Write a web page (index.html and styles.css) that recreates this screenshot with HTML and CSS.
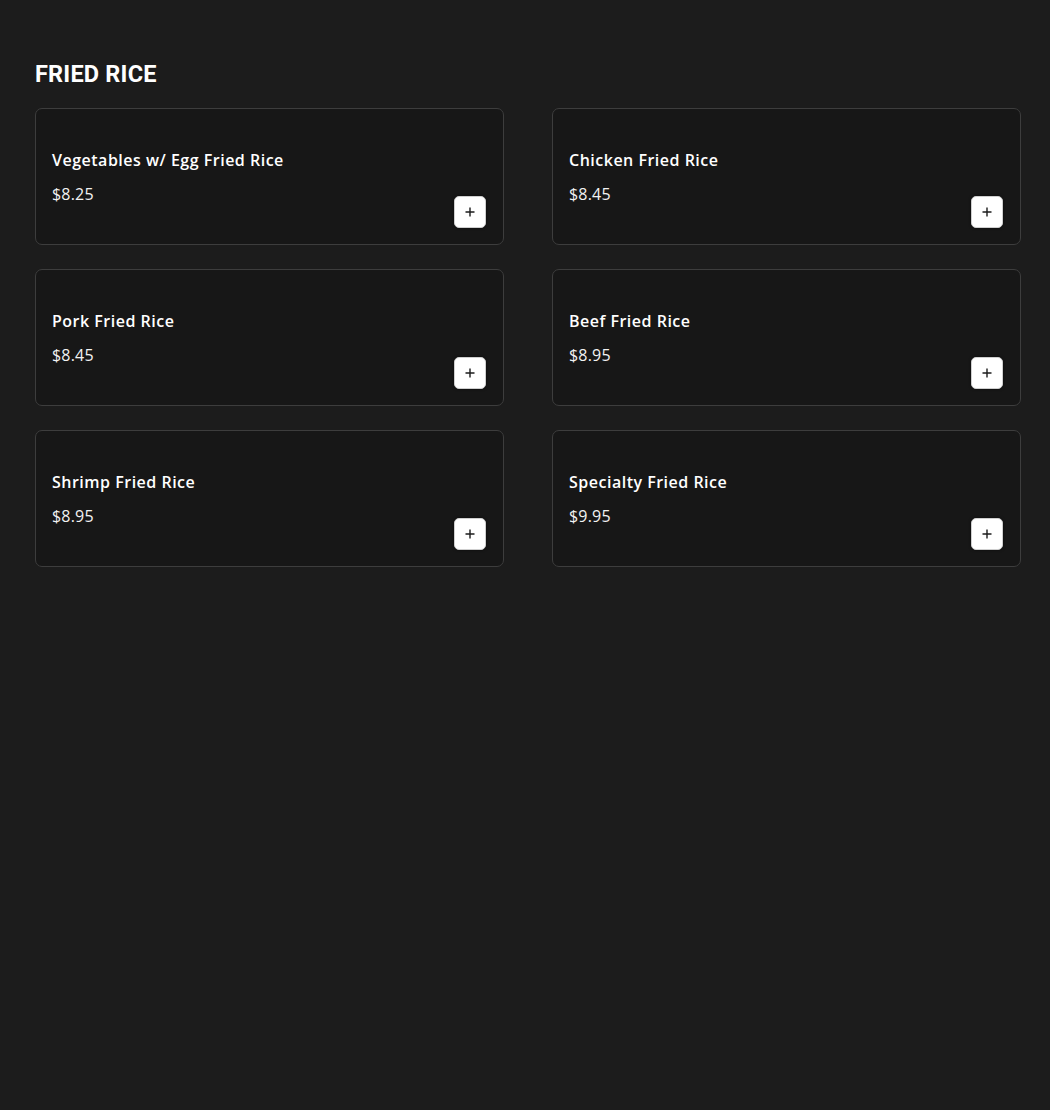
FILE: index.html
```html
<!DOCTYPE html>
<html lang="en">
<head>
<meta charset="utf-8">
<title>Fried Rice</title>
<link rel="stylesheet" href="styles.css">
</head>
<body>
<main class="page">
  <h2 class="section-title">FRIED RICE</h2>
  <div class="grid">
    <div class="card">
      <div class="info"><div class="name">Vegetables w/ Egg Fried Rice</div><div class="price">$8.25</div></div>
      <button class="add" aria-label="Add"><svg viewBox="0 0 12 12" width="12" height="12"><path d="M6 1.5v9M1.5 6h9" stroke="#1c1c1c" stroke-width="1.4" fill="none"/></svg></button>
    </div>
    <div class="card">
      <div class="info"><div class="name">Chicken Fried Rice</div><div class="price">$8.45</div></div>
      <button class="add" aria-label="Add"><svg viewBox="0 0 12 12" width="12" height="12"><path d="M6 1.5v9M1.5 6h9" stroke="#1c1c1c" stroke-width="1.4" fill="none"/></svg></button>
    </div>
    <div class="card">
      <div class="info"><div class="name">Pork Fried Rice</div><div class="price">$8.45</div></div>
      <button class="add" aria-label="Add"><svg viewBox="0 0 12 12" width="12" height="12"><path d="M6 1.5v9M1.5 6h9" stroke="#1c1c1c" stroke-width="1.4" fill="none"/></svg></button>
    </div>
    <div class="card">
      <div class="info"><div class="name">Beef Fried Rice</div><div class="price">$8.95</div></div>
      <button class="add" aria-label="Add"><svg viewBox="0 0 12 12" width="12" height="12"><path d="M6 1.5v9M1.5 6h9" stroke="#1c1c1c" stroke-width="1.4" fill="none"/></svg></button>
    </div>
    <div class="card">
      <div class="info"><div class="name">Shrimp Fried Rice</div><div class="price">$8.95</div></div>
      <button class="add" aria-label="Add"><svg viewBox="0 0 12 12" width="12" height="12"><path d="M6 1.5v9M1.5 6h9" stroke="#1c1c1c" stroke-width="1.4" fill="none"/></svg></button>
    </div>
    <div class="card">
      <div class="info"><div class="name">Specialty Fried Rice</div><div class="price">$9.95</div></div>
      <button class="add" aria-label="Add"><svg viewBox="0 0 12 12" width="12" height="12"><path d="M6 1.5v9M1.5 6h9" stroke="#1c1c1c" stroke-width="1.4" fill="none"/></svg></button>
    </div>
  </div>
</main>
</body>
</html>
```

FILE: styles.css
```css
html, body {
  margin: 0;
  padding: 0;
  background: #1c1c1c;
  min-height: 100%;
}
body {
  color: #ffffff;
  font-family: "Open Sans", "Liberation Sans", sans-serif;
}
.page {
  padding: 59px 29px 0 35px;
}
.section-title {
  margin: 0 0 19px 0;
  font-family: Roboto, "Liberation Sans", sans-serif;
  font-weight: 700;
  font-size: 23.5px;
  line-height: 30px;
  letter-spacing: 0.2px;
}
.grid {
  display: grid;
  grid-template-columns: 1fr 1fr;
  column-gap: 48px;
  row-gap: 24px;
}
.card {
  box-sizing: border-box;
  height: 137px;
  background: #171717;
  border: 1px solid #3d3d3d;
  border-radius: 7px;
  padding: 16px 17px 16px 16px;
  display: flex;
  justify-content: space-between;
  align-items: flex-end;
}
.info {
  align-self: flex-start;
  padding-top: 25px;
}
.name {
  font-size: 16px;
  font-weight: 600;
  line-height: 20px;
  letter-spacing: 0.5px;
}
.price {
  margin-top: 14px;
  font-size: 16px;
  font-weight: 400;
  line-height: 20px;
  letter-spacing: 0.2px;
  color: #f2f2f2;
}
.add {
  width: 32px;
  height: 32px;
  padding: 0;
  border: 1px solid #cfcfcf;
  border-radius: 5px;
  background: #ffffff;
  display: flex;
  align-items: center;
  justify-content: center;
  box-shadow: 0 0 3px rgba(0,0,0,0.6);
  cursor: pointer;
}
```
